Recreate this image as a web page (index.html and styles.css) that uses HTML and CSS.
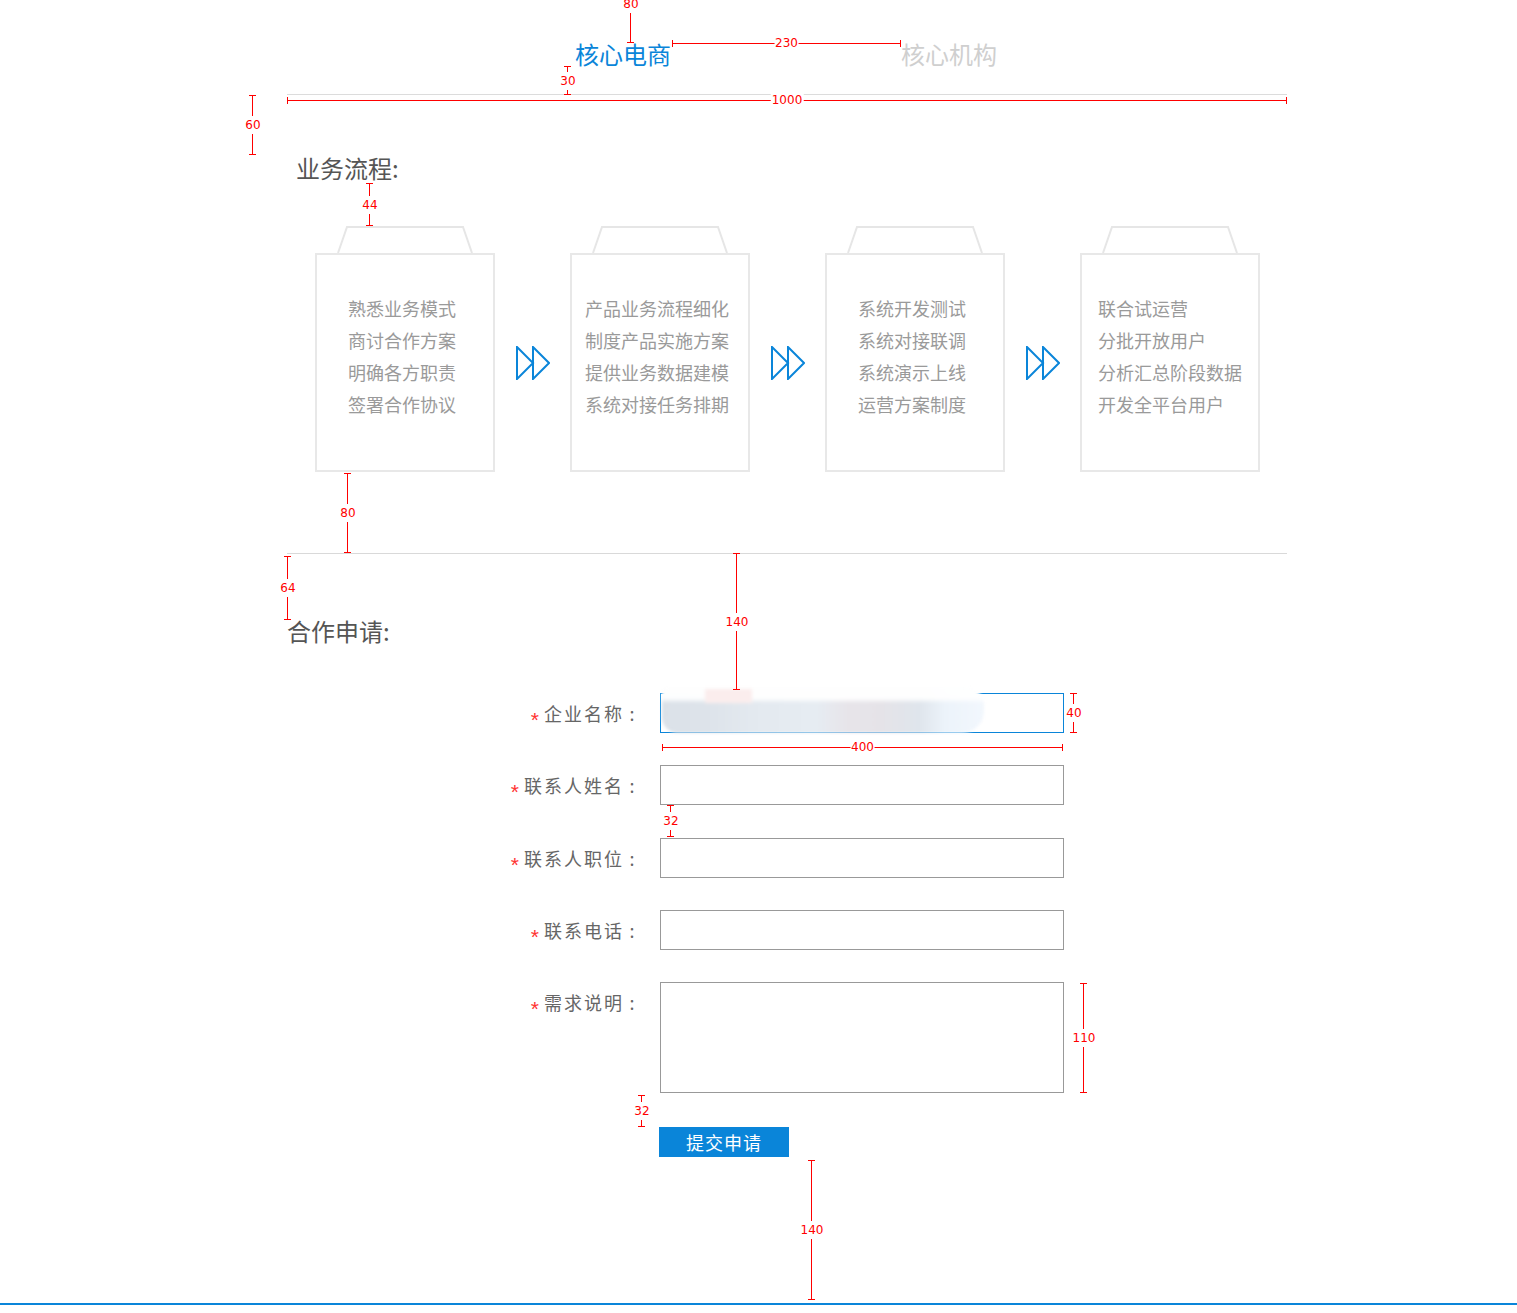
FILE: index.html
```html
<!DOCTYPE html>
<html lang="zh-CN">
<head>
<meta charset="utf-8">
<title>合作申请</title>
<link rel="stylesheet" href="styles.css">
</head>
<body>
<div class="page">
  <nav class="tabs">
    <a class="tab tab-active">核心电商</a>
    <a class="tab">核心机构</a>
  </nav>

  <section class="flow">
    <h2 class="sec-title flow-title">业务流程:</h2>
    <div class="steps">
      <div class="step">
        <svg class="step-cap" width="180" height="27" viewBox="0 0 180 27"><polyline points="23,27 32,1 148,1 157,27" /></svg>
        <div class="step-box"><p class="step-text">熟悉业务模式<br>商讨合作方案<br>明确各方职责<br>签署合作协议</p></div>
      </div>
      <div class="arrow"><svg width="34" height="34" viewBox="0 0 34 34"><polygon points="1,1 17,17 1,33" /><polygon points="17,1 33,17 17,33" /></svg></div>
      <div class="step">
        <svg class="step-cap" width="180" height="27" viewBox="0 0 180 27"><polyline points="23,27 32,1 148,1 157,27" /></svg>
        <div class="step-box"><p class="step-text">产品业务流程细化<br>制度产品实施方案<br>提供业务数据建模<br>系统对接任务排期</p></div>
      </div>
      <div class="arrow"><svg width="34" height="34" viewBox="0 0 34 34"><polygon points="1,1 17,17 1,33" /><polygon points="17,1 33,17 17,33" /></svg></div>
      <div class="step">
        <svg class="step-cap" width="180" height="27" viewBox="0 0 180 27"><polyline points="23,27 32,1 148,1 157,27" /></svg>
        <div class="step-box"><p class="step-text">系统开发测试<br>系统对接联调<br>系统演示上线<br>运营方案制度</p></div>
      </div>
      <div class="arrow"><svg width="34" height="34" viewBox="0 0 34 34"><polygon points="1,1 17,17 1,33" /><polygon points="17,1 33,17 17,33" /></svg></div>
      <div class="step">
        <svg class="step-cap" width="180" height="27" viewBox="0 0 180 27"><polyline points="23,27 32,1 148,1 157,27" /></svg>
        <div class="step-box step-box-wide"><p class="step-text">联合试运营<br>分批开放用户<br>分析汇总阶段数据<br>开发全平台用户</p></div>
      </div>
    </div>
  </section>

  <section class="apply">
    <h2 class="sec-title apply-title">合作申请:</h2>
    <form class="form">
      <div class="row">
        <label class="label"><i class="req">*</i>企业名称<span class="colon">:</span></label>
        <div class="field"><input class="input input-focus" type="text"><div class="blur"></div></div>
      </div>
      <div class="row">
        <label class="label"><i class="req">*</i>联系人姓名<span class="colon">:</span></label>
        <div class="field"><input class="input" type="text"></div>
      </div>
      <div class="row">
        <label class="label"><i class="req">*</i>联系人职位<span class="colon">:</span></label>
        <div class="field"><input class="input" type="text"></div>
      </div>
      <div class="row">
        <label class="label"><i class="req">*</i>联系电话<span class="colon">:</span></label>
        <div class="field"><input class="input" type="text"></div>
      </div>
      <div class="row row-area">
        <label class="label"><i class="req">*</i>需求说明<span class="colon">:</span></label>
        <div class="field"><textarea class="input area"></textarea></div>
      </div>
      <div class="row row-submit">
        <span class="label label-empty"></span>
        <button class="submit" type="button">提交申请</button>
      </div>
    </form>
  </section>
</div>
<footer class="footer"></footer>

<div class="marks">
  <div class="dv m1"><span>80</span></div>
  <div class="dh m2"><span>230</span></div>
  <div class="dv m3"><span>30</span></div>
  <div class="dh m4"><span>1000</span></div>
  <div class="dv m5"><span>60</span></div>
  <div class="dv m6"><span>44</span></div>
  <div class="dv m7"><span>80</span></div>
  <div class="dv m8"><span>64</span></div>
  <div class="dv m9"><span>140</span></div>
  <div class="dv m10"><span>40</span></div>
  <div class="dh m11"><span>400</span></div>
  <div class="dv m12"><span>32</span></div>
  <div class="dv m13"><span>110</span></div>
  <div class="dv m14"><span>32</span></div>
  <div class="dv m15"><span>140</span></div>
</div>
</body>
</html>
```

FILE: styles.css
```css
* { box-sizing: border-box; }
html, body { margin: 0; padding: 0; background: #fff; }
body {
  font-family: "Noto Sans CJK SC", "Microsoft YaHei", sans-serif;
  color: #666;
  position: relative;
  overflow-x: hidden;
}

.page {
  width: 1000px;
  margin-left: 287px;
}

/* tabs */
.tabs {
  display: flex;
  justify-content: center;
  gap: 230px;
  padding-top: 42px;
  padding-bottom: 28px;
  padding-right: 2px;
  border-bottom: 1px solid #dcdcdc;
}
.tab {
  font-size: 24px;
  line-height: 24px;
  color: #cfcfcf;
  text-decoration: none;
}
.tab-active { color: #0a85d9; }

/* section titles */
.sec-title {
  margin: 0;
  font-size: 24px;
  line-height: 24px;
  font-weight: normal;
  color: #555;
}
.flow-title { margin-top: 61px; padding-left: 9px; }
.apply-title { margin-top: 65px; }

/* flow */
.flow { border-bottom: 1px solid #d9d9d9; padding-bottom: 81px; }
.steps {
  display: flex;
  margin-top: 46px;
  padding-left: 28px;
}
.step { width: 180px; display: flex; flex-direction: column; }
.step-cap { display: block; }
.step-cap polyline { fill: none; stroke: #e6e6e6; stroke-width: 2; }
.step-box {
  height: 219px;
  border: 2px solid #e8e8e8;
  padding-top: 37px;
  padding-right: 6px;
  text-align: center;
}
.step-box-wide { padding-right: 0; }
.step-text {
  display: inline-block;
  margin: 0;
  text-align: left;
  font-size: 18px;
  line-height: 32px;
  color: #9a9a9a;
  white-space: nowrap;
}
.arrow {
  width: 75px;
  margin-top: 27px;
  height: 219px;
  display: flex;
  align-items: center;
  justify-content: center;
  padding-left: 1px;
}
.arrow svg { display: block; }
.arrow polygon { fill: none; stroke: #0a85d9; stroke-width: 2; }

/* form */
.form { margin-top: 50px; }
.row { display: flex; align-items: flex-start; margin-bottom: 32.25px; }
.label {
  width: 353px;
  height: 40px;
  margin-right: 20px;
  text-align: right;
  font-size: 18px;
  line-height: 40px;
  letter-spacing: 2px;
  color: #666;
  white-space: nowrap;
}
.label-empty { height: 30px; }
.req {
  font-style: normal;
  font-family: "Liberation Sans", Arial, sans-serif;
  font-size: 21px;
  line-height: 0;
  color: #f33;
  letter-spacing: 0;
  margin-right: 5px;
  vertical-align: -6px;
}
.colon {
  display: inline-block;
  width: 16px;
  text-align: center;
  letter-spacing: 0;
  line-height: 0;
}
.field { position: relative; }
.input {
  display: block;
  width: 404px;
  height: 40px;
  border: 1px solid #999;
  background: #fff;
  margin: 0;
  padding: 0 10px;
  font: inherit;
  outline: none;
}
.input-focus { border-color: #0a85d9; }
.area { height: 111px; resize: none; padding: 8px 10px; }
.row-area { margin-bottom: 34px; }
.row-submit { margin-bottom: 0; }
.submit {
  width: 130px;
  height: 30px;
  margin-left: -1px;
  border: 0;
  padding: 0;
  background: #0a85d9;
  color: #fff;
  font-family: inherit;
  font-size: 18px;
  line-height: 30px;
  letter-spacing: 1px;
}

/* blurred pasted image over first field */
.blur {
  position: absolute;
  left: 2px;
  top: -6px;
  width: 322px;
  height: 46px;
  border-radius: 4px 18px 22px 16px;
  background:
    linear-gradient(180deg, rgba(255,255,255,0.97) 0, rgba(255,255,255,0.95) 24%, rgba(255,255,255,0) 36%),
    linear-gradient(90deg, #dbe1e8 0%, #dde3ea 14%, #e3e9ef 28%, #e6ecf2 48%, #e7e4e9 58%, #e5e3e8 68%, #dfe5ec 80%, #ecf3fa 88%, #f2f7fd 100%);
  filter: blur(1.5px);
}
.blur::before {
  content: "";
  position: absolute;
  left: 43px;
  top: 2px;
  width: 47px;
  height: 14px;
  background: #fbeded;
  filter: blur(1px);
}

/* footer */
.footer {
  margin-top: 146px;
  border-top: 2px solid #0a85d9;
  height: 10px;
}

/* measurement marks */
.marks { position: absolute; left: 0; top: 0; width: 0; height: 0; }
.dv, .dh { position: absolute; }
.dv { width: 0; border-left: 1px solid #f00; }
.dh { height: 0; border-top: 1px solid #f00; }
.dv::before, .dv::after {
  content: ""; position: absolute; left: -4px; width: 7px; border-top: 1px solid #f00;
}
.dv::before { top: 0; }
.dv::after { bottom: 0; }
.dh::before, .dh::after {
  content: ""; position: absolute; top: -4px; height: 7px; border-left: 1px solid #f00;
}
.dh::before { left: 0; }
.dh::after { right: 0; }
.dv span, .dh span {
  position: absolute;
  left: 50%;
  top: 50%;
  transform: translate(-50%, -50%);
  background: #fff;
  font-family: "DejaVu Sans", Verdana, sans-serif;
  font-size: 12px;
  line-height: 14px;
  color: #f00;
  white-space: nowrap;
}
.dv span { padding: 2px 0; }
.dh span { padding: 0 1px; margin-top: -1px; }

.m1 { left: 630px; top: -35px; height: 78px; }
.m2 { left: 672px; top: 43px; width: 229px; }
.m3 { left: 567px; top: 66px; height: 29px; }
.m4 { left: 287px; top: 100px; width: 1000px; }
.m5 { left: 252px; top: 95px; height: 60px; }
.m6 { left: 369px; top: 183px; height: 43px; }
.m7 { left: 347px; top: 473px; height: 80px; }
.m8 { left: 287px; top: 556px; height: 64px; }
.m9 { left: 736px; top: 553px; height: 137px; }
.m10 { left: 1073px; top: 693px; height: 40px; }
.m11 { left: 662px; top: 747px; width: 401px; }
.m12 { left: 670px; top: 805px; height: 32px; }
.m13 { left: 1083px; top: 983px; height: 110px; }
.m14 { left: 641px; top: 1095px; height: 32px; }
.m15 { left: 811px; top: 1160px; height: 140px; }
```
